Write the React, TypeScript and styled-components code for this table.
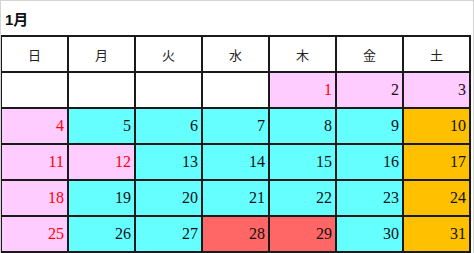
import React from 'react';
import styled, {createGlobalStyle} from 'styled-components';

const GlobalStyle = createGlobalStyle`
  html, body {
    margin: 0;
    padding: 0;
    background: #ffffff;
  }
`;

const Frame = styled.div`
  width: 474px;
  height: 253px;
  box-sizing: border-box;
  border: 1px solid #d4d4d4;
  border-bottom: none;
  overflow: hidden;
`;

const Title = styled.div`
  height: 34px;
  display: flex;
  align-items: center;
  padding-left: 4px;
  font-family: "Liberation Sans", "Noto Sans CJK JP", sans-serif;
  font-weight: 700;
  font-size: 15px;
  color: #111;
`;

const Grid = styled.div`
  margin-left: -1px;
  width: 471px;
  box-sizing: border-box;
  display: grid;
  grid-template-columns: repeat(7, 65px);
  grid-auto-rows: 34px;
  gap: 2px;
  padding: 2px;
  background: #1a1a1a;
`;

const HeadCell = styled.div`
  background: #ffffff;
  display: flex;
  align-items: center;
  justify-content: center;
  font-family: "Noto Sans CJK JP", sans-serif;
  font-size: 13px;
  color: #222;
`;

type Kind = 'blank' | 'holiday' | 'work' | 'sat' | 'busy';

const bg: Record<Kind, string> = {
  blank: '#ffffff',
  holiday: '#ffccff',
  work: '#66ffff',
  sat: '#ffc000',
  busy: '#ff6666',
};

const DayCell = styled.div<{$kind: Kind; $red?: boolean}>`
  background: ${p => bg[p.$kind]};
  display: flex;
  align-items: center;
  justify-content: flex-end;
  padding-right: 3px;
  font-family: "Liberation Serif", "DejaVu Serif", serif;
  font-size: 16px;
  color: ${p => (p.$red ? '#ff0000' : '#111')};
`;

const weekdays = ['日', '月', '火', '水', '木', '金', '土'];

type Day = {n?: number; kind: Kind; red?: boolean};

const days: Day[] = [
  {kind: 'blank'}, {kind: 'blank'}, {kind: 'blank'}, {kind: 'blank'},
  {n: 1, kind: 'holiday', red: true}, {n: 2, kind: 'holiday'}, {n: 3, kind: 'holiday'},
  {n: 4, kind: 'holiday', red: true}, {n: 5, kind: 'work'}, {n: 6, kind: 'work'}, {n: 7, kind: 'work'},
  {n: 8, kind: 'work'}, {n: 9, kind: 'work'}, {n: 10, kind: 'sat'},
  {n: 11, kind: 'holiday', red: true}, {n: 12, kind: 'holiday', red: true}, {n: 13, kind: 'work'},
  {n: 14, kind: 'work'}, {n: 15, kind: 'work'}, {n: 16, kind: 'work'}, {n: 17, kind: 'sat'},
  {n: 18, kind: 'holiday', red: true}, {n: 19, kind: 'work'}, {n: 20, kind: 'work'}, {n: 21, kind: 'work'},
  {n: 22, kind: 'work'}, {n: 23, kind: 'work'}, {n: 24, kind: 'sat'},
  {n: 25, kind: 'holiday', red: true}, {n: 26, kind: 'work'}, {n: 27, kind: 'work'}, {n: 28, kind: 'busy'},
  {n: 29, kind: 'busy'}, {n: 30, kind: 'work'}, {n: 31, kind: 'sat'},
];

export default function App() {
  return (
    <>
      <GlobalStyle/>
      <Frame>
        <Title>1月</Title>
        <Grid>
          {weekdays.map(w => <HeadCell key={w}>{w}</HeadCell>)}
          {days.map((d, i) => (
            <DayCell key={i} $kind={d.kind} $red={d.red}>{d.n ?? ''}</DayCell>
          ))}
        </Grid>
      </Frame>
    </>
  );
}
